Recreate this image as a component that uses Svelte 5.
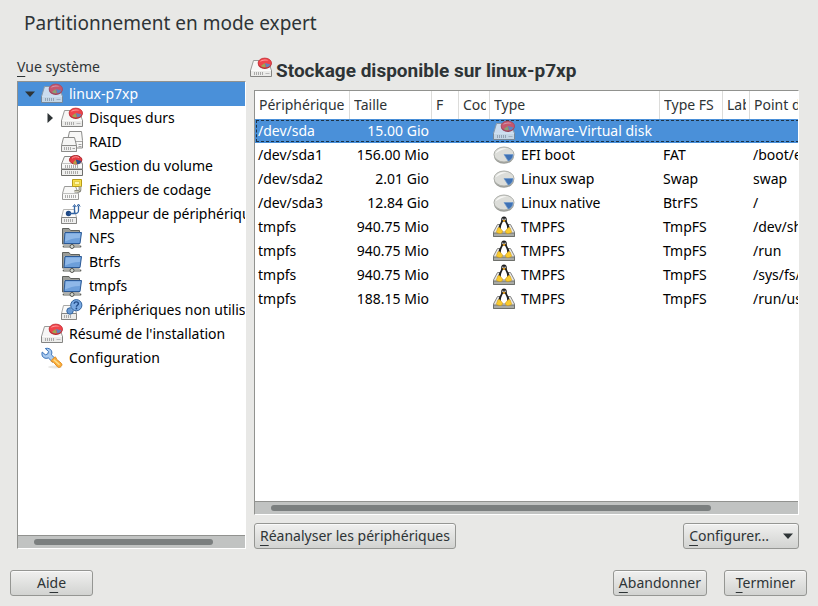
<script>
  let selectedNode = $state('linux-p7xp');
  let selectedRow = $state(0);

  const tree = [
    {
      label: 'linux-p7xp', icon: 'disk', arrow: 'open',
      children: [
        { label: 'Disques durs', icon: 'disk', arrow: 'closed' },
        { label: 'RAID', icon: 'raid' },
        { label: 'Gestion du volume', icon: 'lvm' },
        { label: 'Fichiers de codage', icon: 'crypt' },
        { label: 'Mappeur de périphériques', icon: 'mapper' },
        { label: 'NFS', icon: 'folder' },
        { label: 'Btrfs', icon: 'folder' },
        { label: 'tmpfs', icon: 'folder' },
        { label: 'Périphériques non utilisés', icon: 'unused' }
      ]
    },
    { label: "Résumé de l'installation", icon: 'disk' },
    { label: 'Configuration', icon: 'wrench' }
  ];

  const columns = [
    { title: 'Périphérique', width: 95 },
    { title: 'Taille', width: 82 },
    { title: 'F', width: 27 },
    { title: 'Codé', width: 31 },
    { title: 'Type', width: 170 },
    { title: 'Type FS', width: 63 },
    { title: 'Label', width: 27 },
    { title: 'Point de montage', width: 130 }
  ];

  const rows = [
    { device: '/dev/sda', size: '15.00 Gio', icon: 'disk', type: 'VMware-Virtual disk', fs: '', mount: '' },
    { device: '/dev/sda1', size: '156.00 Mio', icon: 'part', type: 'EFI boot', fs: 'FAT', mount: '/boot/efi' },
    { device: '/dev/sda2', size: '2.01 Gio', icon: 'part', type: 'Linux swap', fs: 'Swap', mount: 'swap' },
    { device: '/dev/sda3', size: '12.84 Gio', icon: 'part', type: 'Linux native', fs: 'BtrFS', mount: '/' },
    { device: 'tmpfs', size: '940.75 Mio', icon: 'tux', type: 'TMPFS', fs: 'TmpFS', mount: '/dev/shm' },
    { device: 'tmpfs', size: '940.75 Mio', icon: 'tux', type: 'TMPFS', fs: 'TmpFS', mount: '/run' },
    { device: 'tmpfs', size: '940.75 Mio', icon: 'tux', type: 'TMPFS', fs: 'TmpFS', mount: '/sys/fs/cgroup' },
    { device: 'tmpfs', size: '188.15 Mio', icon: 'tux', type: 'TMPFS', fs: 'TmpFS', mount: '/run/user/0' }
  ];
</script>

{#snippet vents(x, y, n)}
  {#each Array(n) as _, i}
    <path d="M{x + i * 2} {y}v3" stroke="#a3a3a1" stroke-width=".9" />
  {/each}
{/snippet}

{#snippet glyph(name)}
  <svg class="icon" viewBox="0 0 22 22" aria-hidden="true">
    {#if name === 'disk'}
      <path d="M3.500 3.500H18L21.500 13.500H.5z" fill="#f6f6f5" stroke="#9a9a98" />
      <path d="M.5 13.500h21v6H.5z" fill="#ececea" stroke="#858583" />
      <path d="M1 13.500h20" stroke="#fbfbfa" />
      {@render vents(4.5, 15, 5)}
      <path d="M15.500 16.500h4" stroke="#bbb" />
      <ellipse cx="14.800" cy="7" rx="6.700" ry="4.900" fill="#a9262c" />
      <ellipse cx="14.800" cy="6" rx="6.700" ry="4.900" fill="#f0444b" stroke="#c3343a" stroke-width=".8" />
      <path d="M9.800 4.800c1.400-2.400 6-3.200 8.800-1.200-2.700-.2-6 0-8.800 1.200z" fill="#ff9a9c" />
      <path d="M15 6 20.500 7.400c-.8 1.600-2.300 2.500-4.300 2.800z" fill="#6583bb" />
      <path d="M14.500 6 15.700 10.300c-1.800.2-3.600-.2-4.800-1.200z" fill="#9aa855" />
    {:else if name === 'raid'}
      <path d="M8.500.5h12l1 9v7.500H6.500V9.500z" fill="#f8f8f7" stroke="#8c8c8a" />
      <path d="M7 10.500h14" stroke="#a9a9a7" />
      <path d="M17.500 13.500h3M17.500 15.500h3" stroke="#a3a3a1" />
      <path d="M2.500 6.500h11l2 8v6H.5v-6z" fill="#f6f6f5" stroke="#8c8c8a" />
      <path d="M.5 14.500h15v6H.5z" fill="#f0f0ef" stroke="#8c8c8a" />
      {@render vents(3.5, 16, 4)}
      <path d="M11.500 17.500h2.500" stroke="#a3a3a1" />
    {:else if name === 'lvm'}
      <path d="M3.500 1.500H18l3.500 7.500v5H.5V9z" fill="#f8f8f7" stroke="#858583" />
      <path d="M1 8.500h20" stroke="#c5c5c3" />
      {@render vents(4.5, 10, 7)}
      <path d="M.5 14.500h21v6H.5z" fill="#f0f0ef" stroke="#6e6e6c" />
      {@render vents(4.5, 16, 7)}
      <ellipse cx="14.700" cy="4.800" rx="6.200" ry="4.300" fill="#e63a41" stroke="#a9262c" />
      <path d="M11 3.200c1.500-1.600 5-2 7-.6" stroke="#ff9a9c" fill="none" />
      <path d="M14.800 4.500 20.300 6c-.6 1.900-2 3-4.200 3.200z" fill="#274f91" />
      <path d="m14.500 4.500 1.400 4.700c-1.500.2-3-.1-4-.9z" fill="#b7a145" />
    {:else if name === 'crypt'}
      <path d="M3.500 7.500h11l3 7v6H1.500v-6z" fill="#f8f8f7" stroke="#9a9a98" />
      <path d="M2 14.500h15" stroke="#c0c0be" />
      {@render vents(4.5, 16, 6)}
      <path d="M11.500.5h9v7h-9z" fill="#f8e04b" stroke="#b89c18" />
      <path d="M13.500 2.500h5v3h-5z" fill="#fff6a8" stroke="#d9c23a" stroke-width=".7" />
      <path d="M19 7.500v3.200c0 1-1 1.600-2 1.600h-3.500" fill="none" stroke="#77776c" stroke-width="2.600" />
      <path d="M19 7.500v3.200c0 1-1 1.600-2 1.600h-3.500" fill="none" stroke="#e6e4cf" />
    {:else if name === 'mapper'}
      <path d="M2.500 6.500h11l2 8v6H.5v-6z" fill="#fdfdfd" stroke="#b5b5b3" />
      <path d="M.5 14.500h15v6H.5z" fill="#f0f0ef" stroke="#858583" />
      {@render vents(3.5, 16, 5)}
      <circle cx="7.500" cy="10.500" r="2.700" fill="#204a87" />
      <path d="M8 10.500h5.500V2.800M13.500 10.500c3.300 0 4-.8 4-3V2.500" fill="none" stroke="#3465a4" stroke-width="1.300" />
      <path d="m11.800 4 1.700-2.500L15.200 4M15.900 3.500 17.500 1l1.700 2.500" fill="none" stroke="#3465a4" />
    {:else if name === 'folder'}
      <path d="M1.500 17V1.500h6.500l1.500 2H18.500V17z" fill="#9b9d99" stroke="#5f615d" />
      <path d="M3 5.500h14" stroke="#c0c2be" />
      <path d="M4 5.500h16.500L19 16.500H3z" fill="#6d9fda" stroke="#2c5a96" />
      <path d="M4.800 6.500h14.500l-.5 4.500C13 11.200 8 12.500 4 14.500z" fill="#8fb8e8" />
      <path d="M2.500 19.500h17" stroke="#62645f" stroke-width="1.800" stroke-linecap="round" />
      <path d="M3 19.500h16" stroke="#c3c6c0" stroke-width=".7" />
      <path d="M11 17v2" stroke="#555753" stroke-width="2" />
      <circle cx="11" cy="19.500" r="2" fill="#d3d7cf" stroke="#555753" />
    {:else if name === 'unused'}
      <path d="M2.500 6.500h11l2 8v6H.5v-6z" fill="#fafaf9" stroke="#a8a8a6" />
      <path d="M.5 14.500h15v6H.5z" fill="#ececea" stroke="#858583" />
      {@render vents(3.5, 16, 4)}
      <circle cx="9" cy="12" r="3.200" fill="#6b9bd4" stroke="#34659f" />
      <path d="m9.500 9.500 2.500 2.500 2-2-2.500-3z" fill="#88b2e2" />
      <circle cx="15.300" cy="6.200" r="5.600" fill="#7aa9e2" stroke="#34659f" />
      <path d="M13.200 4.800c0-2.600 4.200-2.600 4.200 0 0 1.500-2 1.500-2 3" fill="none" stroke="#204a87" stroke-width="1.400" />
      <circle cx="15.400" cy="9.500" r=".9" fill="#204a87" />
    {:else if name === 'wrench'}
      <ellipse cx="14" cy="20" rx="7" ry="1.500" fill="#e8e8e6" />
      <path d="M4.300 1.500 7.500 4.500 6.700 7 4.300 7.800 1.200 5C.3 8 1.500 10.500 4 11.200c1.500.4 2.500 0 3.300-.3l4.500 4.300 3-3-4.400-4.400c.4-1 .7-2.500.1-3.900C9.600 1.700 7 .8 4.300 1.500z" fill="#a9caef" stroke="#3b73b9" />
      <path d="m10.500 13.200 3-3c.7-.6 1.300-.2 1.500.6l.5 1.400 4.900 4.200c1.800 1.900-1.700 5.200-3.700 3.600l-4.100-4.700-1.600-.5c-.9-.2-1.300-.9-.5-1.600z" fill="#fcaf3e" stroke="#e08a1c" />
      <path d="m12.800 12.800 5.700 5" stroke="#fde08c" stroke-width="1.500" />
    {:else if name === 'part'}
      <ellipse cx="11" cy="12.300" rx="10" ry="7.500" fill="#9b9d98" />
      <ellipse cx="11" cy="10.500" rx="10" ry="7.500" fill="#dcddd9" stroke="#aeb0ab" />
      <path d="M2.500 9.500c1.500-4.500 7-6 11.500-5-4 .8-8 2.500-11.500 5z" fill="#f6f6f4" />
      <path d="M11 10.500h9c.2 3-2 5.500-4.800 6.600z" fill="#3f72b5" stroke="#6f98cc" stroke-width=".7" />
    {:else if name === 'tux'}
      <path d="M4.500 8.500h13l4 7.500v4.500H.5V16z" fill="#e8e8e6" stroke="#858583" />
      <path d="M.5 17h21v3.500H.5z" fill="#a8aaa5" stroke="#6e706b" />
      <path d="M11 .5c-2 0-2.900 1.500-2.800 3.300.1 2-.5 2.700-1.700 4.800C5.500 10.500 5 13 6 15.500h10c1-2.500.5-5-.5-6.900-1.200-2.100-1.800-2.800-1.700-4.800C13.900 2 13 .5 11 .5z" fill="#1e1f20" />
      <path d="M11 5.500c-1.300 0-1.600 1.300-2.300 2.800-.9 1.700-1.200 4.200-.4 7.200h5.400c.8-3 .5-5.500-.4-7.200-.7-1.500-1-2.800-2.300-2.800z" fill="#fff" />
      <path d="m9.300 4.800 1.700-1 1.700 1-1.700 1.200z" fill="#f2a516" />
      <circle cx="9.900" cy="3.300" r=".7" fill="#fff" /><circle cx="12.100" cy="3.300" r=".7" fill="#fff" />
      <path d="M6 11.500c1.300 0 2.300 2 3.400 3.300.8 1.300-.8 3-2.400 2.800-1.300-.2-3.300-.5-3.600-1.500-.3-.9.700-1.500.9-2.600.1-1 .5-2 1.700-2zM16 11.500c-1.300 0-2.300 2-3.400 3.300-.8 1.300.8 3 2.400 2.800 1.300-.2 3.300-.5 3.600-1.500.3-.9-.7-1.500-.9-2.600-.1-1-.5-2-1.700-2z" fill="#f9cb2e" stroke="#c7941a" stroke-width=".6" />
    {/if}
  </svg>
{/snippet}

{#snippet nodes(items, level)}
  {#each items as item}
    <li role="none">
      <button
        type="button"
        role="treeitem"
        class="node"
        class:nested={level > 0}
        class:selected={selectedNode === item.label}
        aria-selected={selectedNode === item.label}
        aria-expanded={item.arrow ? item.arrow === 'open' : undefined}
        onclick={() => (selectedNode = item.label)}
      >
        <span class="arrow">
          {#if item.arrow === 'open'}
            <svg width="10" height="6" viewBox="0 0 10 6"><path d="M0 .5h10L5 6z" fill="currentColor" /></svg>
          {:else if item.arrow === 'closed'}
            <svg width="6" height="10" viewBox="0 0 6 10"><path d="M.5 0v10L6 5z" fill="currentColor" /></svg>
          {/if}
        </span>
        {@render glyph(item.icon)}
        <span class="label">{item.label}</span>
      </button>
      {#if item.children}
        <ul role="group">{@render nodes(item.children, level + 1)}</ul>
      {/if}
    </li>
  {/each}
{/snippet}

<div class="window">
  <h1>Partitionnement en mode expert</h1>

  <main>
    <section class="side">
      <div class="caption" id="tree-caption"><u>V</u>ue système</div>
      <div class="view">
        <ul class="tree" role="tree" aria-labelledby="tree-caption">{@render nodes(tree, 0)}</ul>
        <div class="track"><div class="thumb side-thumb"></div></div>
      </div>
    </section>

    <section class="content">
      <h2>{@render glyph('disk')}<span>Stockage disponible sur linux-p7xp</span></h2>
      <div class="view">
        <div class="scroller">
          <table>
            <colgroup>
              {#each columns as column}<col style="width: {column.width}px" />{/each}
            </colgroup>
            <thead>
              <tr>{#each columns as column}<th scope="col"><div>{column.title}</div></th>{/each}</tr>
            </thead>
            <tbody>
              {#each rows as row, i}
                <tr class:selected={selectedRow === i} onclick={() => (selectedRow = i)}>
                  <td>{row.device}</td>
                  <td class="size">{row.size}</td>
                  <td></td>
                  <td></td>
                  <td><div class="type">{@render glyph(row.icon)}<span>{row.type}</span></div></td>
                  <td>{row.fs}</td>
                  <td></td>
                  <td>{row.mount}</td>
                </tr>
              {/each}
            </tbody>
          </table>
        </div>
        <div class="track"><div class="thumb table-thumb"></div></div>
      </div>
      <div class="actions">
        <button type="button" class="btn"><span><u>R</u>éanalyser les périphériques</span></button>
        <button type="button" class="btn menu" aria-haspopup="menu">
          <span><u>C</u>onfigurer...</span>
          <svg width="10" height="6" viewBox="0 0 10 6" aria-hidden="true"><path d="M0 .5h10L5 6z" fill="currentColor" /></svg>
        </button>
      </div>
    </section>
  </main>

  <footer>
    <button type="button" class="btn wide"><span>Ai<u>d</u>e</span></button>
    <div class="spacer"></div>
    <button type="button" class="btn"><span><u>A</u>bandonner</span></button>
    <button type="button" class="btn wide"><span><u>T</u>erminer</span></button>
  </footer>
</div>

<style>
  :global(body) {
    margin: 0;
    background: #e8e8e6;
  }
  .window {
    box-sizing: border-box;
    min-height: 100vh;
    display: flex;
    flex-direction: column;
    background: #e8e8e6;
    color: #2e3436;
    font: 14px/24px 'Noto Sans', 'Open Sans', sans-serif;
  }
  h1 {
    margin: 0;
    padding: 8px 24px 0;
    font-size: 19px;
    line-height: 30px;
    font-weight: 400;
  }
  main {
    flex: 1;
    display: grid;
    grid-template-columns: minmax(0, 229fr) minmax(0, 545fr);
    gap: 8px;
    padding: 17px 19px 0 17px;
  }
  section {
    display: flex;
    flex-direction: column;
    min-width: 0;
  }
  .caption {
    line-height: 24px;
    padding-bottom: 2px;
  }
  u {
    text-underline-offset: 4px;
    text-decoration-thickness: 1px;
    text-decoration-skip-ink: none;
  }
  .view {
    flex: 1;
    display: flex;
    flex-direction: column;
    min-width: 0;
    background: #fff;
    border: 1px solid #fff;
    border-top-color: #91928f;
    border-left-color: #91928f;
    color: #000;
    overflow: hidden;
  }
  ul {
    list-style: none;
    margin: 0;
    padding: 0;
  }
  .tree {
    flex: 1;
    overflow: hidden;
  }
  .node {
    width: 100%;
    height: 24px;
    display: flex;
    align-items: center;
    padding: 0 0 0 5px;
    border: 0;
    background: transparent;
    color: #000;
    font: inherit;
    text-align: left;
    white-space: nowrap;
    overflow: hidden;
  }
  .node.nested {
    padding-left: 25px;
  }
  .node.selected {
    background: #4a90d9;
    color: #fff;
  }
  .arrow {
    flex: none;
    width: 14px;
    margin-right: 4px;
    display: flex;
    justify-content: center;
    color: #2e3436;
  }
  .icon {
    flex: none;
    width: 22px;
    height: 22px;
    fill: none;
  }
  .selected .icon {
    opacity: 0.75;
  }
  .label {
    margin-left: 6px;
  }
  .track {
    flex: none;
    height: 12px;
    display: flex;
    align-items: center;
    background: #c1c3c2;
    border-top: 1px solid #91928f;
  }
  .thumb {
    height: 6px;
    border-radius: 3px;
    background: #7b7f7f;
  }
  .side-thumb {
    width: 79%;
    margin-left: 7%;
  }
  .table-thumb {
    width: 81%;
    margin-left: 3%;
  }
  h2 {
    box-sizing: border-box;
    margin: 0 0 0 -4px;
    padding-top: 2px;
    height: 35px;
    display: flex;
    align-items: flex-start;
    gap: 4px;
    font: 700 19px/28px Roboto, sans-serif;
  }
  .scroller {
    flex: 1;
    overflow: hidden;
  }
  table {
    width: 100%;
    min-width: 625px;
    table-layout: fixed;
    border-collapse: separate;
    border-spacing: 0;
  }
  th {
    box-sizing: border-box;
    height: 28px;
    padding: 0 3px 0 4px;
    border-right: 1px solid #dcdcda;
    color: #2e3436;
    font-weight: 400;
    text-align: left;
  }
  th div {
    overflow: hidden;
    white-space: nowrap;
  }
  td {
    height: 24px;
    padding: 0 3px;
    white-space: nowrap;
  }
  .size {
    text-align: right;
  }
  .type {
    display: flex;
    align-items: center;
    height: 24px;
    gap: 6px;
  }
  tr.selected td {
    background: #4a90d9;
    color: #fff;
  }
  tr.selected {
    outline: 1px dashed #1d3347;
    outline-offset: -2px;
  }
  .actions {
    display: flex;
    justify-content: space-between;
    padding-top: 8px;
  }
  .btn {
    box-sizing: border-box;
    height: 26px;
    display: flex;
    align-items: center;
    justify-content: center;
    padding: 0 5px;
    border: 1px solid #959693;
    border-radius: 3px;
    background: linear-gradient(#f0f0ef, #d2d3d1);
    box-shadow: inset 0 1px #fafafa;
    color: #2e3436;
    font: inherit;
    white-space: nowrap;
  }
  .menu {
    gap: 14px;
  }
  .wide {
    min-width: 83px;
  }
  footer {
    display: flex;
    gap: 17px;
    padding: 21px 11px 10px 10px;
  }
  .spacer {
    flex: 1;
  }
</style>
